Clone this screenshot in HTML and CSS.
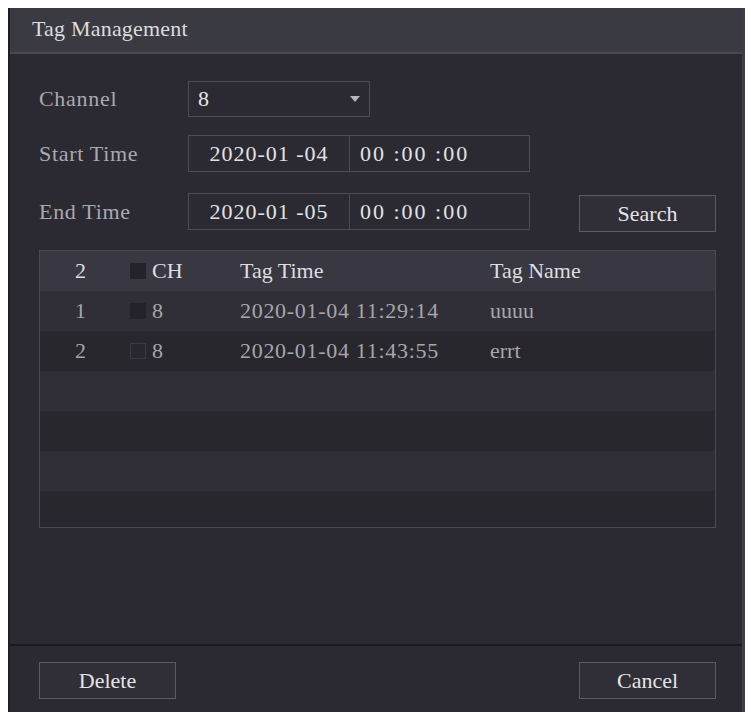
FILE: index.html
```html
<html>
  <head>
    <title>Tag Management</title>
    <link rel="stylesheet" href="styles.css">
  </head>
  <body>
    <div class="dialog">
      <div class="title">Tag Management</div>

      <div class="content">
        <div class="form-row channel">
          <span class="label">Channel</span>
          <div class="select">
            <span class="value">8</span>
            <span class="arrow"></span>
          </div>
        </div>

        <div class="form-row start">
          <span class="label">Start Time</span>
          <div class="datetime">
            <span class="date">2020-01 -04</span>
            <span class="time">00 :00 :00</span>
          </div>
        </div>

        <div class="form-row end">
          <span class="label">End Time</span>
          <div class="datetime">
            <span class="date">2020-01 -05</span>
            <span class="time">00 :00 :00</span>
          </div>
          <div class="button search">Search</div>
        </div>

        <div class="table">
          <div class="row head">
            <span class="idx">2</span>
            <span class="ch"><span class="check filled"></span>CH</span>
            <span>Tag Time</span>
            <span>Tag Name</span>
          </div>
          <div class="row light">
            <span class="idx">1</span>
            <span class="ch"><span class="check filled"></span>8</span>
            <span class="stamp">2020-01-04 11:29:14</span>
            <span>uuuu</span>
          </div>
          <div class="row dark">
            <span class="idx">2</span>
            <span class="ch"><span class="check"></span>8</span>
            <span class="stamp">2020-01-04 11:43:55</span>
            <span>errt</span>
          </div>
          <div class="row light"></div>
          <div class="row dark"></div>
          <div class="row light"></div>
          <div class="row dark"></div>
        </div>
      </div>

      <div class="footer">
        <div class="button">Delete</div>
        <div class="button">Cancel</div>
      </div>
    </div>
  </body>
</html>
```

FILE: styles.css
```css
body {
  margin: 0;
  background: #ffffff;
  font-family: "Liberation Serif", "Times New Roman", serif;
  font-size: 22px;
}

.dialog {
  margin: 8px 0 0 8px;
  width: 737px;
  height: 704px;
  display: flex;
  flex-direction: column;
  background: #2b2a33;
  border-left: 2px solid #1f1e24;
  border-right: 3px solid #3e3d45;
  box-sizing: border-box;
}

.title {
  height: 46px;
  flex: none;
  display: flex;
  align-items: center;
  padding: 0 0 2px 22px;
  box-sizing: border-box;
  background: #3a3a43;
  border-bottom: 2px solid #4b4a53;
  color: #dcdcdc;
  letter-spacing: 0.2px;
}

.content {
  flex: 1;
  padding: 27px 26px 0 29px;
  display: flex;
  flex-direction: column;
}

.form-row {
  display: flex;
  align-items: center;
  height: 37px;
}

.form-row.channel {
  height: 36px;
}

.form-row.start {
  margin-top: 18px;
}

.form-row.end {
  margin-top: 21px;
}

.label {
  width: 149px;
  color: #a9a9ad;
  letter-spacing: 0.7px;
}

.select {
  width: 182px;
  height: 36px;
  box-sizing: border-box;
  border: 1px solid #4d4c55;
  display: flex;
  align-items: center;
  padding: 0 9px;
  color: #e6e6e6;
}

.select .value {
  flex: 1;
}

.arrow {
  width: 0;
  height: 0;
  border-left: 5px solid transparent;
  border-right: 5px solid transparent;
  border-top: 6px solid #b8b8bc;
}

.datetime {
  width: 342px;
  height: 37px;
  box-sizing: border-box;
  border: 1px solid #4d4c55;
  display: flex;
  color: #e2e2e2;
}

.date {
  width: 160px;
  border-right: 1px solid #4d4c55;
  display: flex;
  align-items: center;
  justify-content: center;
  letter-spacing: 1px;
}

.time {
  display: flex;
  align-items: center;
  padding-left: 10px;
  letter-spacing: 2px;
}

.button {
  width: 137px;
  height: 37px;
  box-sizing: border-box;
  border: 1px solid #5c5b64;
  background: #302f38;
  color: #e4e4e4;
  display: flex;
  align-items: center;
  justify-content: center;
}

.search {
  margin-left: auto;
  margin-top: 4px;
}

.table {
  margin-top: 20px;
  height: 278px;
  overflow: hidden;
  border: 1px solid #4a4951;
  box-sizing: border-box;
}

.row {
  height: 40px;
  display: grid;
  grid-template-columns: 81px 119px 250px 1fr;
  align-items: center;
  color: #a6a6aa;
}

.row.head {
  background: #393842;
  color: #dedede;
}

.row.light {
  background: #302f38;
}

.row.dark {
  background: #28272e;
}

.idx {
  text-align: center;
}

.ch {
  display: flex;
  align-items: center;
  padding-left: 9px;
  gap: 6px;
}

.check {
  width: 16px;
  height: 16px;
  box-sizing: border-box;
  border: 1px solid #3b3a43;
}

.check.filled {
  background: #24232a;
  border-color: #24232a;
}

.stamp {
  letter-spacing: 0.7px;
}

.footer {
  flex: none;
  height: 68px;
  box-sizing: border-box;
  border-top: 2px solid #1b1a20;
  padding: 16px 26px 0 29px;
  display: flex;
  justify-content: space-between;
  align-items: flex-start;
}
```
